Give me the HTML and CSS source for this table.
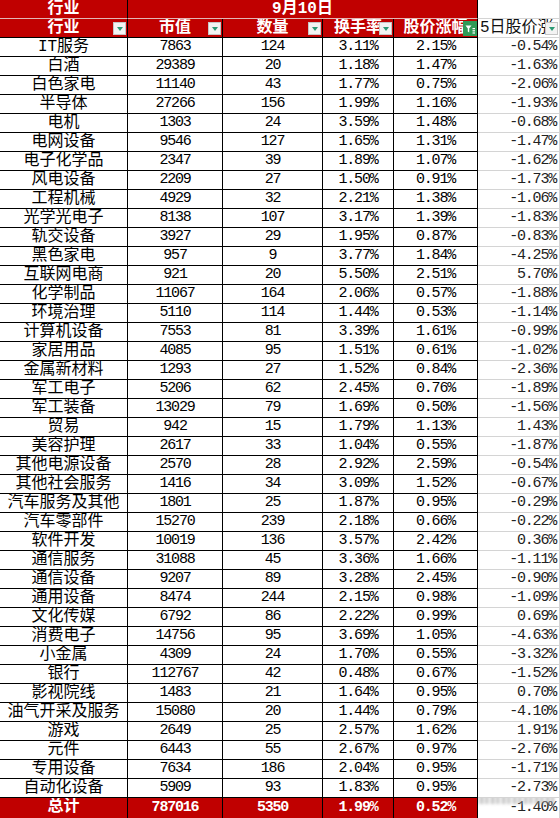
FILE: index.html
```html
<!DOCTYPE html>
<html lang="zh">
<head>
<meta charset="utf-8">
<title>行业统计</title>
<link rel="stylesheet" href="styles.css">
</head>
<body>
<div class="sheet">
  <div class="row head1">
    <div class="c red">行业</div>
    <div class="c red span4">9月10日</div>
    <div class="c blank"></div>
  </div>
  <div class="row head2">
    <div class="c red">行业<span class="fbtn"></span></div>
    <div class="c red">市值<span class="fbtn"></span></div>
    <div class="c red">数量<span class="fbtn"></span></div>
    <div class="c red">换手率<span class="fbtn"></span></div>
    <div class="c red">股价涨幅<span class="fbtn active"><svg viewBox="0 0 14 14" width="14" height="14"><path d="M2.5 3.5h6l-2.3 3v4l-1.4-1v-3z" fill="#fff"/><rect x="9.5" y="6" width="2.5" height="1.2" fill="#fff"/><rect x="9.5" y="8.2" width="2.5" height="1.2" fill="#fff"/><rect x="9.5" y="10.4" width="2.5" height="1.2" fill="#fff"/></svg></span></div>
    <div class="c w lefttext">5日股价涨<span class="fbtn"></span></div>
  </div>
  <div id="body"></div>
  <div class="row total">
    <div class="c red">总计</div>
    <div class="c red num">787016</div>
    <div class="c red num">5350</div>
    <div class="c red num">1.99%</div>
    <div class="c red num">0.52%</div>
    <div class="c w num right">-1.40%<span class="mark"></span></div>
  </div>
</div>
<script>
var data = [
["IT服务","7863","124","3.11%","2.15%","-0.54%"],
["白酒","29389","20","1.18%","1.47%","-1.63%"],
["白色家电","11140","43","1.77%","0.75%","-2.06%"],
["半导体","27266","156","1.99%","1.16%","-1.93%"],
["电机","1303","24","3.59%","1.48%","-0.68%"],
["电网设备","9546","127","1.65%","1.31%","-1.47%"],
["电子化学品","2347","39","1.89%","1.07%","-1.62%"],
["风电设备","2209","27","1.50%","0.91%","-1.73%"],
["工程机械","4929","32","2.21%","1.38%","-1.06%"],
["光学光电子","8138","107","3.17%","1.39%","-1.83%"],
["轨交设备","3927","29","1.95%","0.87%","-0.83%"],
["黑色家电","957","9","3.77%","1.84%","-4.25%"],
["互联网电商","921","20","5.50%","2.51%","5.70%"],
["化学制品","11067","164","2.06%","0.57%","-1.88%"],
["环境治理","5110","114","1.44%","0.53%","-1.14%"],
["计算机设备","7553","81","3.39%","1.61%","-0.99%"],
["家居用品","4085","95","1.51%","0.61%","-1.02%"],
["金属新材料","1293","27","1.52%","0.84%","-2.36%"],
["军工电子","5206","62","2.45%","0.76%","-1.89%"],
["军工装备","13029","79","1.69%","0.50%","-1.56%"],
["贸易","942","15","1.79%","1.13%","1.43%"],
["美容护理","2617","33","1.04%","0.55%","-1.87%"],
["其他电源设备","2570","28","2.92%","2.59%","-0.54%"],
["其他社会服务","1416","34","3.09%","1.52%","-0.67%"],
["汽车服务及其他","1801","25","1.87%","0.95%","-0.29%"],
["汽车零部件","15270","239","2.18%","0.66%","-0.22%"],
["软件开发","10019","136","3.57%","2.42%","0.36%"],
["通信服务","31088","45","3.36%","1.66%","-1.11%"],
["通信设备","9207","89","3.28%","2.45%","-0.90%"],
["通用设备","8474","244","2.15%","0.98%","-1.09%"],
["文化传媒","6792","86","2.22%","0.99%","0.69%"],
["消费电子","14756","95","3.69%","1.05%","-4.63%"],
["小金属","4309","24","1.70%","0.55%","-3.32%"],
["银行","112767","42","0.48%","0.67%","-1.52%"],
["影视院线","1483","21","1.64%","0.95%","0.70%"],
["油气开采及服务","15080","20","1.44%","0.79%","-4.10%"],
["游戏","2649","25","2.57%","1.62%","1.91%"],
["元件","6443","55","2.67%","0.97%","-2.76%"],
["专用设备","7634","186","2.04%","0.95%","-1.71%"],
["自动化设备","5909","93","1.83%","0.95%","-2.73%"]
];
var html = "";
for (var i = 0; i < data.length; i++) {
  var r = data[i];
  html += '<div class="row data">' +
    '<div class="c name">' + r[0] + '</div>' +
    '<div class="c num">' + r[1] + '</div>' +
    '<div class="c num">' + r[2] + '</div>' +
    '<div class="c num">' + r[3] + '</div>' +
    '<div class="c num">' + r[4] + '</div>' +
    '<div class="c w num right">' + r[5] + '</div>' +
    '</div>';
}
document.getElementById("body").innerHTML = html;
</script>
</body>
</html>
```
FILE: styles.css
```css
html, body {
  margin: 0;
  padding: 0;
  background: #ffffff;
}
.sheet {
  width: 560px;
  font-family: "Liberation Mono", "Noto Sans CJK SC", monospace;
  font-size: 16px;
  color: #000;
}
.row {
  display: grid;
  grid-template-columns: 128px 95px 100px 71px 84px 82px;
  height: 19px;
}
.c {
  position: relative;
  box-sizing: border-box;
  border-right: 1px solid #000;
  border-bottom: 1px solid #000;
  text-align: center;
  line-height: 18px;
  white-space: nowrap;
  overflow: hidden;
}
.red {
  background: #c00000;
  color: #fff;
  font-weight: bold;
}
.span4 {
  grid-column: span 4;
}
.head1 .red {
  border-bottom-color: #e2b5b5;
}
.head1 .span4 {
  border-right-color: #000;
}
.blank, .w {
  background: #fff;
  border-right-color: #d4d4d4;
  border-bottom-color: #d4d4d4;
}
.lefttext {
  text-align: left;
  padding-left: 2px;
  font-weight: normal;
  color: #111;
}
.num {
  letter-spacing: -1.2px;
  font-size: 15px;
}
.right {
  text-align: right;
  padding-right: 3px;
  color: #222;
}
.name {
  font-size: 16px;
}
.total {
  height: 20px;
}
.total .c {
  line-height: 19px;
  border-bottom: none;
}
.total .red {
  font-weight: bold;
}
.fbtn {
  position: absolute;
  right: 1px;
  bottom: 2px;
  width: 13px;
  height: 13px;
  box-sizing: border-box;
  background: #f3f3f3;
  border: 1px solid #c6c6c6;
  display: flex;
  align-items: center;
  justify-content: center;
}
.fbtn::after {
  content: "";
  width: 0;
  height: 0;
  border-left: 3px solid transparent;
  border-right: 3px solid transparent;
  border-top: 4px solid #2b9a74;
}
.fbtn.active {
  width: 14px;
  height: 15px;
  bottom: 1px;
  right: 0;
  background: #2f9a57;
  border: none;
}
.fbtn.active::after {
  display: none;
}
.mark {
  position: absolute;
  left: -20px;
  top: -8px;
  width: 96px;
  height: 14px;
  background: repeating-linear-gradient(90deg, rgba(150,150,150,0.55) 0 3px, rgba(210,210,210,0.45) 3px 6px, rgba(120,120,120,0.5) 6px 8px, rgba(230,230,230,0.4) 8px 11px);
  filter: blur(1.5px);
}
```
